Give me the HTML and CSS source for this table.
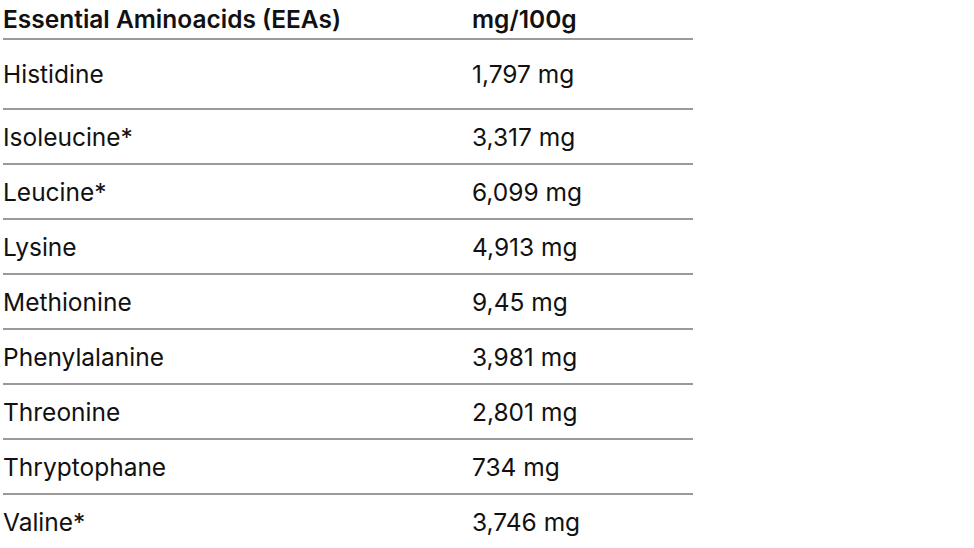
FILE: index.html
```html
<!DOCTYPE html>
<html lang="en">
<head>
    <meta charset="UTF-8">
    <meta name="viewport" content="width=device-width, initial-scale=1.0">
    <title>Essential Aminoacids</title>
    <link rel="stylesheet" href="styles.css">
</head>
<body>
    <div class="table-wrap">
        <table class="amino-table">
            <thead>
                <tr>
                    <th>Essential Aminoacids (EEAs)</th>
                    <th>mg/100g</th>
                </tr>
            </thead>
            <tbody>
                <tr class="first"><td>Histidine</td><td>1,797 mg</td></tr>
                <tr><td>Isoleucine*</td><td>3,317 mg</td></tr>
                <tr><td>Leucine*</td><td>6,099 mg</td></tr>
                <tr><td>Lysine</td><td>4,913 mg</td></tr>
                <tr><td>Methionine</td><td>9,45 mg</td></tr>
                <tr><td>Phenylalanine</td><td>3,981 mg</td></tr>
                <tr><td>Threonine</td><td>2,801 mg</td></tr>
                <tr><td>Thryptophane</td><td>734 mg</td></tr>
                <tr><td>Valine*</td><td>3,746 mg</td></tr>
            </tbody>
        </table>
    </div>
</body>
</html>
```

FILE: styles.css
```css
body {
    font-family: Inter, "Liberation Sans", sans-serif;
    background-color: #ffffff;
    color: #111;
    margin: 0;
    padding: 0;
}
.table-wrap {
    padding-left: 3px;
    width: 690px;
}
.amino-table {
    width: 100%;
    border-collapse: collapse;
}
.amino-table th,
.amino-table td {
    text-align: left;
    padding: 0;
    border-bottom: 2px solid #9a9a9a;
    font-size: 24.5px;
    vertical-align: middle;
}
.amino-table th {
    font-weight: 600;
    height: 38px;
}
.amino-table th:first-child,
.amino-table td:first-child {
    width: 469px;
}
.amino-table td {
    font-weight: 400;
    height: 53px;
}
.amino-table tr.first td {
    height: 68px;
}
.amino-table tr:last-child td {
    border-bottom: none;
}
```
